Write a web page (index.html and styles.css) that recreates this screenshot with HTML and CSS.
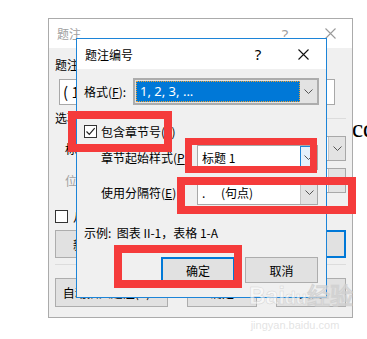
FILE: index.html
```html
<!DOCTYPE html>
<html lang="zh-CN">
<head>
    <meta charset="UTF-8">
    <title>题注编号</title>
    <link rel="stylesheet" href="styles.css">
</head>
<body>
    <div class="doc-text">cd</div>

    <!-- dialog behind: 题注 -->
    <div class="win back">
        <div class="titlebar">
            <span class="title">题注</span>
            <span class="help">?</span>
            <span class="close">
                <svg width="11" height="11" viewBox="0 0 11 11"><path d="M0.5 0.5 L10.5 10.5 M10.5 0.5 L0.5 10.5" stroke="#9a9a9a" stroke-width="1.1" fill="none"/></svg>
            </span>
        </div>
        <div class="win-body">
            <div class="line">题注(C):</div>
            <div class="input">( 1</div>
            <div class="group"><span>选项</span><span class="rule"></span></div>
            <div class="opt-row">
                <span class="opt-label">标签(L):</span>
                <div class="combo"><span class="val">图表</span><span class="arrow"><svg width="9" height="5" viewBox="0 0 9 5"><path d="M0.5 0.5 L4.5 4.5 L8.5 0.5" stroke="#555" fill="none"/></svg></span></div>
            </div>
            <div class="opt-row second">
                <span class="opt-label dim">位置(P):</span>
                <div class="combo"><span class="val">所选项目下方</span><span class="arrow"><svg width="9" height="5" viewBox="0 0 9 5"><path d="M0.5 0.5 L4.5 4.5 L8.5 0.5" stroke="#555" fill="none"/></svg></span></div>
            </div>
            <div class="check-line"><span class="box"></span><span>从题注中排除标签(E)</span></div>
            <div class="btn-row">
                <span class="btn wide">新建标签(N)...</span>
                <span class="btn">删除标签(D)</span>
                <span class="btn focus">编号(U)...</span>
            </div>
            <div class="sep"></div>
            <div class="btn-row bottom">
                <span class="btn auto">自动插入题注(A)...</span>
                <span class="btn">确定</span>
                <span class="btn">关闭</span>
            </div>
        </div>
    </div>

    <!-- dialog in front: 题注编号 -->
    <div class="win front">
        <div class="titlebar">
            <span class="title">题注编号</span>
            <span class="help">?</span>
            <span class="close">
                <svg width="11" height="11" viewBox="0 0 11 11"><path d="M0.5 0.5 L10.5 10.5 M10.5 0.5 L0.5 10.5" stroke="#111" stroke-width="1.1" fill="none"/></svg>
            </span>
        </div>
        <div class="win-body">
            <div class="fmt-row">
                <span class="fmt-label">格式(<u>F</u>):</span>
                <div class="combo readonly">
                    <span class="val sel">1, 2, 3, ...</span>
                    <span class="arrow"><svg width="9" height="5" viewBox="0 0 9 5"><path d="M0.5 0.5 L4.5 4.5 L8.5 0.5" stroke="#555" fill="none"/></svg></span>
                </div>
            </div>
            <div class="check-row">
                <span class="box">
                    <svg width="11" height="11" viewBox="0 0 11 11"><path d="M1.5 5.5 L4.3 8.3 L9.7 2.2" stroke="#222" stroke-width="1.2" fill="none"/></svg>
                </span>
                <span>包含章节号(<u>L</u>)</span>
            </div>
            <div class="field-row">
                <span class="field-label">章节起始样式(<u>P</u>)</span>
                <div class="combo">
                    <span class="val">标题 1</span>
                    <span class="arrow hot"><svg width="9" height="5" viewBox="0 0 9 5"><path d="M0.5 0.5 L4.5 4.5 L8.5 0.5" stroke="#555" fill="none"/></svg></span>
                </div>
            </div>
            <div class="field-row">
                <span class="field-label">使用分隔符(<u>E</u>)</span>
                <div class="combo">
                    <span class="val"><span class="dot">.</span>(句点)</span>
                    <span class="arrow"><svg width="9" height="5" viewBox="0 0 9 5"><path d="M0.5 0.5 L4.5 4.5 L8.5 0.5" stroke="#555" fill="none"/></svg></span>
                </div>
            </div>
            <div class="sample">示例:&nbsp; 图表 II-1，表格 1-A</div>
            <div class="actions">
                <span class="btn focus">确定</span>
                <span class="btn">取消</span>
            </div>
        </div>
    </div>

    <!-- red annotation frames -->
    <div class="mark mark-check"></div>
    <div class="mark mark-style"></div>
    <div class="mark mark-sep"></div>
    <div class="mark mark-ok"></div>

    <div class="watermark">
        <div class="wm-big">Bai<span class="paw">du</span>经验</div>
        <div class="wm-small">jingyan.baidu.com</div>
    </div>
</body>
</html>
```

FILE: styles.css
```css
* { box-sizing: border-box; }
body { margin: 0; width: 367px; height: 339px; background: #fff; position: relative; overflow: hidden; font-family: "Noto Sans CJK SC", sans-serif; font-size: 12px; color: #000; }
u { text-decoration: underline; text-underline-offset: 1px; }

.doc-text { position: absolute; left: 352px; top: 113px; font-family: "Liberation Serif", serif; font-size: 25px; line-height: 32px; }

.win { position: absolute; display: flex; flex-direction: column; background: #f0f0f0; }
.back { left: 48px; top: 18px; width: 305px; height: 300px; border: 1px solid #ababab; }
.front { left: 76px; top: 38px; width: 251px; height: 260px; border: 1px solid #1c84d8; }

.titlebar { display: flex; align-items: center; background: #fff; flex-shrink: 0; }
.title { flex: 1; }
.help { width: 20px; text-align: center; font-family: "Noto Sans", sans-serif; font-size: 15px; line-height: 20px; }
.close { display: flex; justify-content: center; align-items: center; }
.back .titlebar { height: 29px; padding-left: 8px; color: #a0a0a0; }
.back .help { margin-right: 13px; color: #a0a0a0; }
.back .close { width: 44px; }
.front .titlebar { height: 30px; padding-left: 8px; }
.front .help { margin-right: 12px; }
.front .close { width: 46px; }

.win-body { display: flex; flex-direction: column; flex: 1; }

/* back dialog */
.back .win-body { padding: 0 6px; }
.back .line { margin-top: 10px; line-height: 14px; }
.input { margin: 7px 11px 0 4px; height: 26px; border: 1px solid #a8a8a8; background: #fff; padding-left: 3px; font-size: 15px; line-height: 24px; }
.group { display: flex; align-items: center; margin-top: 6px; line-height: 14px; }
.group .rule { flex: 1; height: 1px; background: #dcdcdc; margin-left: 6px; }
.opt-row { display: flex; align-items: center; margin-top: 11px; height: 24px; padding-left: 10px; }
.opt-row.second { margin-top: 8px; }
.opt-label { width: 60px; }
.dim { color: #a0a0a0; }
.opt-row .combo { flex: 1; }
.check-line { display: flex; align-items: center; gap: 5px; margin-top: 18px; height: 13px; }
.check-line .box { width: 13px; height: 13px; border: 1px solid #333; background: #fff; }
.btn-row { display: flex; gap: 8px; margin-top: 7px; height: 28px; }
.btn-row .btn { flex: 1; }
.btn-row .wide { justify-content: flex-start; padding-left: 17px; }
.btn-row.bottom { margin-top: 13px; height: 29px; gap: 19px; }
.btn-row .auto { flex: 0 0 113px; }
.sep { height: 1px; background: #dcdcdc; margin-top: 6px; }

/* shared controls */
.combo { display: flex; height: 25px; border: 1px solid #a8a8a8; background: #fff; }
.combo .val { flex: 1; padding-left: 4px; line-height: 23px; white-space: nowrap; overflow: hidden; }
.combo .arrow { width: 17px; display: flex; align-items: center; justify-content: center; background: #e3e3e3; border-left: 1px solid #c4c4c4; }
.combo .arrow.hot { background: #e5f1fb; border: 1px solid #1c84d8; }
.combo.readonly { height: 27px; border: 2px solid #adadad; background: #e3e3e3; padding: 1px 0 1px 1px; }
.combo.readonly .val { background: #0078d7; color: #fff; outline: 1px dotted #f0a030; outline-offset: -1px; line-height: 21px; font-family: "Noto Sans", sans-serif; font-size: 13px; }
.combo.readonly .arrow { border-left: none; }
.dot { display: inline-block; width: 19px; }

.btn { display: flex; align-items: center; justify-content: center; background: #e1e1e1; border: 1px solid #adadad; white-space: nowrap; overflow: hidden; }
.btn.focus { border: 2px solid #0078d7; }

/* front dialog */
.front .win-body { padding: 9px 7px 0 7px; }
.fmt-row { display: flex; align-items: center; }
.fmt-label { width: 49px; }
.fmt-row .combo { flex: 1; }
.check-row { display: flex; align-items: center; gap: 4px; margin-top: 17px; height: 18px; }
.check-row .box { width: 13px; height: 13px; border: 1px solid #333; background: #fff; display: flex; align-items: center; justify-content: center; }
.field-row { display: flex; align-items: center; margin-top: 10px; padding-left: 17px; margin-right: 1px; }
.check-row + .field-row { margin-top: 5px; }
.field-label { width: 96px; }
.field-row .combo { flex: 1; }
.sample { margin-top: 21px; line-height: 14px; }
.actions { display: flex; justify-content: flex-end; gap: 10px; margin-top: 17px; margin-right: 1px; }
.actions .btn { width: 74px; height: 26px; }
.actions .btn + .btn { width: 73px; }

/* annotations */
.mark { position: absolute; border: 8px solid #f53b3b; }
.mark-check { left: 68px; top: 111px; width: 104px; height: 41px; }
.mark-style { left: 185px; top: 138px; width: 132px; height: 35px; border-width: 7px; }
.mark-sep { left: 177px; top: 177px; width: 179px; height: 37px; }
.mark-ok { left: 114px; top: 245px; width: 128px; height: 43px; }

.watermark { position: absolute; left: 249px; top: 282px; width: 92px; text-align: center; color: rgba(255, 255, 255, 0.55); -webkit-text-stroke: 0.5px rgba(190, 190, 190, 0.6); font-family: "Liberation Sans", sans-serif; }
.wm-big { font-size: 23px; font-weight: bold; line-height: 28px; white-space: nowrap; }
.paw { font-size: 18px; }
.wm-small { font-size: 11px; line-height: 14px; margin-top: 6px; color: rgba(220, 220, 220, 0.8); -webkit-text-stroke: 0; }
```
